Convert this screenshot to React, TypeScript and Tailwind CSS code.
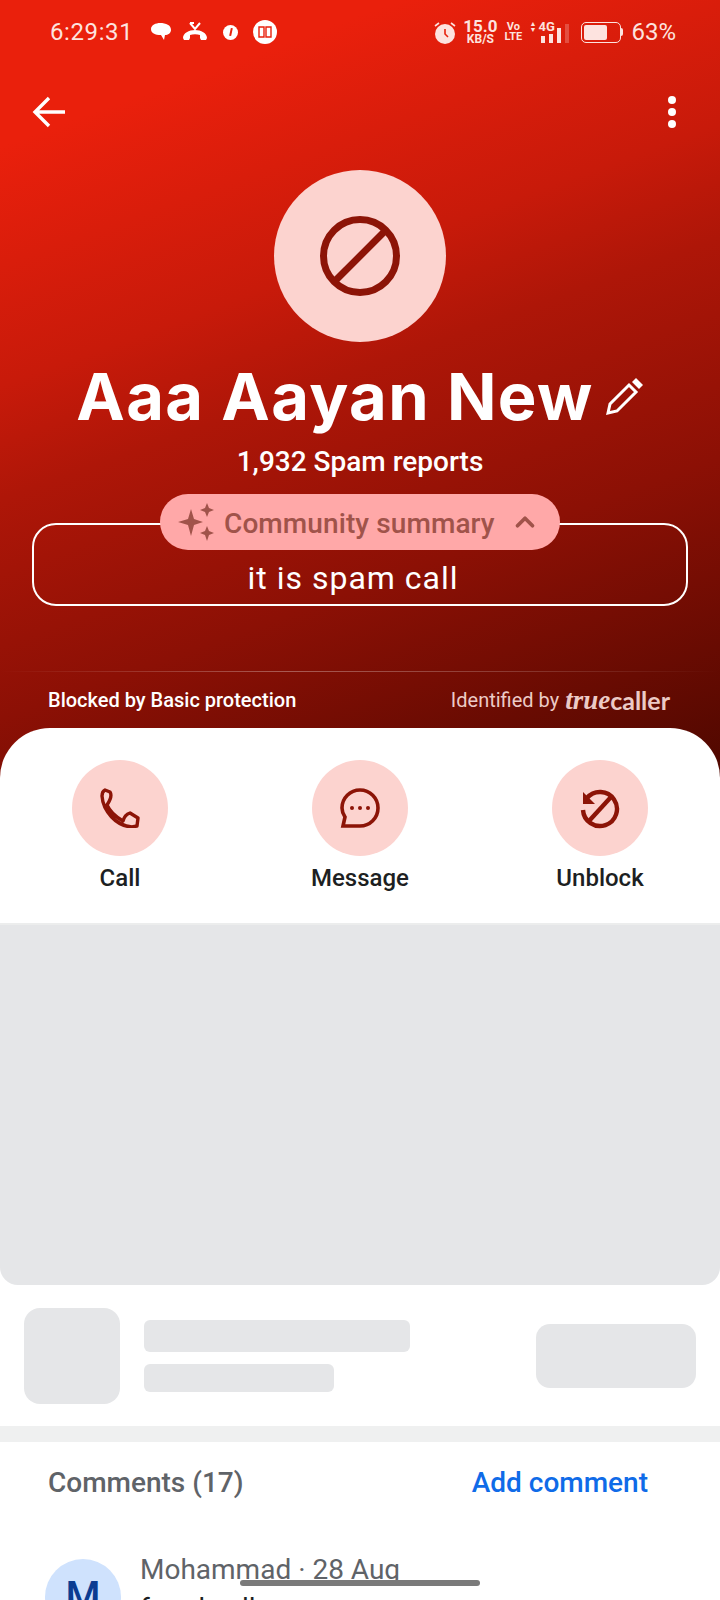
import React from "react";
import { ChevronUp } from "lucide-react";

const roboto = "font-['Roboto',sans-serif]";

function StatusBar() {
  return (
    <div className="flex h-[64px] items-center pl-[50px] pr-[44px] text-[#fde3df]">
      <span className="w-[100px] font-['Roboto',sans-serif] text-[24px] tracking-[0.6px]">6:29:31</span>
      {/* notification icons */}
      <svg width="20" height="18" viewBox="0 0 20 18" className="ml-[1px]" fill="#fff">
        <path d="M9 0c6 0 11 2 11 7 0 3-3 5-6 5l-1 5-3-5C4 12 0 10 0 6c0-4 5-6 9-6z" />
      </svg>
      <svg width="24" height="20" viewBox="0 0 24 20" className="ml-[12px]" fill="#fff">
        <path d="M0 16c0-5 6-8 12-8s12 3 12 8l-1 2h-5l-1-2v-3c-3-1-7-1-10 0v3l-1 2H1z" />
        <path d="M7 1l5 6 5-6M7 1h4" fill="none" stroke="#fff" strokeWidth="2" />
      </svg>
      <div className="ml-[16px] flex h-[15px] w-[15px] items-center justify-center rounded-full bg-white">
        <span className="h-[8px] w-[2px] rotate-12 bg-[#e8200c]" />
      </div>
      <div className="ml-[15px] flex h-[24px] w-[24px] items-center justify-center rounded-full bg-white">
        <svg width="14" height="14" viewBox="0 0 14 14" fill="none" stroke="#e8200c" strokeWidth="1.4">
          <path d="M1 2h5v10H1zM8 2h5v10H8z" />
        </svg>
      </div>
      <div className="flex-1" />
      {/* system icons */}
      <svg width="22" height="23" viewBox="0 0 22 23">
        <circle cx="11" cy="13" r="10" fill="#fde3df" />
        <path d="M11 8v5l3 3" fill="none" stroke="#e8200c" strokeWidth="1.6" />
        <path d="M1 5l4-3M21 5l-4-3" stroke="#fde3df" strokeWidth="1.6" />
      </svg>
      <div className="ml-[6px] flex w-[36px] flex-col items-center font-['Roboto',sans-serif] font-bold">
        <span className="h-[13px] text-[17px] leading-[13px]">15.0</span>
        <span className="mt-[1px] h-[10px] text-[12px] leading-[10px]">KB/S</span>
      </div>
      <div className="ml-[7px] flex w-[16px] flex-col items-center font-['Roboto',sans-serif] text-[11px] font-bold leading-[10px]">
        <span>Vo</span>
        <span>LTE</span>
      </div>
      <div className="relative ml-[8px] h-[22px] w-[40px]">
        <span className="absolute left-[9px] top-[-1px] font-['Roboto',sans-serif] text-[13px] font-bold leading-[13px]">4G</span>
        <span className="absolute left-0 top-0 text-[7px] leading-[6px]">▲</span>
        <span className="absolute left-0 top-[6px] text-[7px] leading-[6px]">▼</span>
        <div className="absolute bottom-0 left-[12px] flex items-end gap-[4px]">
          <span className="h-[7px] w-[4px] bg-[#fde3df]" />
          <span className="h-[9px] w-[4px] bg-[#fde3df]" />
          <span className="h-[15px] w-[4px] bg-[#fde3df]" />
          <span className="h-[19px] w-[4px] bg-[#fde3df] opacity-25" />
        </div>
      </div>
      <div className="ml-[12px] flex items-center">
        <div className="flex h-[21px] w-[40px] items-center rounded-[5px] border-[1.5px] border-[#fde3df] p-[2px]">
          <div className="h-full w-[23px] rounded-[2px] bg-[#fde3df]" />
        </div>
        <span className="h-[8px] w-[2px] rounded-r-sm bg-[#fde3df]" />
      </div>
      <span className="ml-[8px] font-['Roboto',sans-serif] text-[24px]">63%</span>
    </div>
  );
}

function BlockIcon({ size, stroke }: { size: number; stroke: number }) {
  return (
    <svg width={size} height={size} viewBox="0 0 80 80" fill="none" stroke="#8c1407" strokeWidth={stroke}>
      <circle cx="40" cy="40" r={40 - stroke / 2} />
      <path d="M13 67L67 13" />
    </svg>
  );
}

function Header() {
  return (
    <div className="flex h-[780px] flex-col items-center bg-[linear-gradient(160deg,#ea200c_14%,#c81a0a_37%,#ae1608_48%,#8c1005_69%,#520800_98%)]">
      <div className="w-full">
        <StatusBar />
        <div className="mt-[15px] flex h-[66px] items-center justify-between pl-[32px] pr-[44px] text-white">
          <svg width="34" height="32" viewBox="0 0 34 32" fill="none" stroke="#fff" strokeWidth="3.4">
            <path d="M33 16H3M17 2L3 16l14 14" />
          </svg>
          <div className="flex flex-col gap-[4px]">
            <span className="h-[8px] w-[8px] rounded-full bg-white" />
            <span className="h-[8px] w-[8px] rounded-full bg-white" />
            <span className="h-[8px] w-[8px] rounded-full bg-white" />
          </div>
        </div>
      </div>
      <div className="mt-[25px] flex h-[172px] w-[172px] items-center justify-center rounded-full bg-[#fcd3cf]">
        <BlockIcon size={80} stroke={7} />
      </div>
      <div className="mt-[16px] flex h-[76px] items-center text-white">
        <span className="font-['Inter',sans-serif] text-[65px] font-bold leading-none tracking-[1.4px]">Aaa Aayan New</span>
        <svg width="38" height="38" viewBox="0 0 38 38" className="ml-[12px]" fill="none" stroke="#fff" strokeWidth="3">
          <path d="M2 36l2-9L23 8l7 7-19 19z" />
          <path d="M26 5l3-3 1-1 7 7-1 1-3 3z" fill="#fff" stroke="none" />
        </svg>
      </div>
      <div className={`mt-[12px] text-[28px] font-medium leading-[32px] text-white ${roboto}`}>1,932 Spam reports</div>
      <div className="relative mt-[45px] flex h-[83px] w-[656px] items-end justify-center rounded-[24px] border-2 border-white pb-[6px] pr-[14px]">
        <div className="absolute left-[126px] top-[-31px] flex h-[56px] w-[400px] items-center rounded-[28px] bg-[#ffa8a8] pl-[17px] text-[#a0534a]">
          <svg width="38" height="38" viewBox="0 0 38 38" fill="#a0534a">
            <path d="M14 6l3 10 9 3-9 3-3 11-3-11-10-3 10-3z" />
            <path d="M30 0l2 5 5 2-5 2-2 5-2-5-5-2 5-2z" />
            <path d="M30 23l2 5 5 2-5 2-2 6-2-6-5-2 5-2z" />
          </svg>
          <span className={`ml-[9px] mt-[3px] text-[28px] font-medium leading-none tracking-[0.1px] ${roboto}`}>Community summary</span>
          <ChevronUp size={30} strokeWidth={3} className="ml-[15px]" />
        </div>
        <span className={`text-[32px] leading-[40px] tracking-[1px] text-white ${roboto}`}>it is spam call</span>
      </div>
      <div className="mt-[65px] h-[1px] w-full bg-[linear-gradient(90deg,transparent,#ffffff50_40%,#ffffff30_70%,transparent)]" />
      <div className="mt-[15px] flex w-full items-center justify-between pl-[48px] pr-[50px]">
        <span className={`text-[20px] font-medium leading-[26px] text-white ${roboto}`}>Blocked by Basic protection</span>
        <div className="flex items-center text-[#eccac6]">
          <span className={`text-[20px] leading-[26px] ${roboto}`}>Identified by</span>
          <span className="ml-[6px] font-['Liberation_Serif',serif] text-[27px] font-bold italic leading-[26px]">true</span>
          <span className="font-['Lato',sans-serif] text-[25px] font-bold leading-[26px]">caller</span>
        </div>
      </div>
    </div>
  );
}

function ActionButton({ label, children }: { label: string; children: React.ReactNode }) {
  return (
    <div className="flex w-[240px] flex-col items-center">
      <div className="flex h-[96px] w-[96px] items-center justify-center rounded-full bg-[#fcd3cf]">{children}</div>
      <span className={`mt-[8px] text-[24px] font-medium leading-[28px] text-[#1d1f22] ${roboto}`}>{label}</span>
    </div>
  );
}

function Actions() {
  return (
    <div className="relative -mt-[52px] flex h-[197px] rounded-t-[50px] border-b-2 border-[#eceded] bg-white pt-[32px]">
      <ActionButton label="Call">
        <svg width="40" height="40" viewBox="0 0 40 40" fill="none" stroke="#8c1407" strokeWidth="3.4" strokeLinejoin="round">
          <path d="M5 2l5 2c2 3 1 7-3 13 3 7 9 12 16 16 1-4 4-7 7-8l8 5-1 8-5 1C16 38 3 23 2 8c0-3 1-5 3-6z" />
        </svg>
      </ActionButton>
      <ActionButton label="Message">
        <svg width="40" height="40" viewBox="0 0 40 40" fill="none" stroke="#8c1407" strokeWidth="3.6">
          <path d="M20 2a18 18 0 0 1 0 36H3l2-9c-2-3-3-6-3-9A18 18 0 0 1 20 2z" />
          <circle cx="12" cy="20" r="2" fill="#8c1407" stroke="none" />
          <circle cx="20" cy="20" r="2" fill="#8c1407" stroke="none" />
          <circle cx="28" cy="20" r="2" fill="#8c1407" stroke="none" />
        </svg>
      </ActionButton>
      <ActionButton label="Unblock">
        <svg width="44" height="44" viewBox="0 0 44 44" fill="none" stroke="#8c1407" strokeWidth="4.4">
          <path d="M9 12a17 17 0 1 1-4 12" />
          <path d="M33 11L11 35" />
          <path d="M5 6v12h12z" fill="#8c1407" stroke="none" />
        </svg>
      </ActionButton>
    </div>
  );
}

function Skeletons() {
  return (
    <>
      <div className="h-[360px] rounded-b-[18px] bg-[#e5e6e8]" />
      <div className="flex items-center px-[24px] pb-[22px] pt-[23px]">
        <div className="h-[96px] w-[96px] rounded-[16px] bg-[#e5e6e8]" />
        <div className="ml-[24px] flex flex-col gap-[12px]">
          <div className="h-[32px] w-[266px] rounded-[6px] bg-[#e5e6e8]" />
          <div className="h-[28px] w-[190px] rounded-[6px] bg-[#e5e6e8]" />
        </div>
        <div className="ml-auto h-[64px] w-[160px] rounded-[14px] bg-[#e5e6e8]" />
      </div>
      <div className="h-[16px] bg-[#eff0f0]" />
    </>
  );
}

function Comments() {
  return (
    <div className="bg-white">
      <div className={`flex items-center justify-between pl-[48px] pr-[72px] pt-[25px] text-[28px] font-medium leading-[32px] ${roboto}`}>
        <span className="text-[#5f6368]">Comments (17)</span>
        <span className="text-[#0f6be8]">Add comment</span>
      </div>
      <div className="mt-[60px] flex pl-[45px]">
        <div className="flex h-[76px] w-[76px] items-center justify-center rounded-full bg-[#cfe2fd]">
          <span className={`text-[40px] font-medium text-[#0b3c91] ${roboto}`}>M</span>
        </div>
        <div className={`-mt-[4px] ml-[19px] ${roboto}`}>
          <div className="text-[28px] leading-[30px] text-[#5f6368]">Mohammad · 28 Aug</div>
          <div className="mt-[8px] text-[28px] leading-[32px] text-[#1d1f22]">fraud call</div>
        </div>
      </div>
    </div>
  );
}

export default function App() {
  return (
    <div className="relative h-[1600px] w-[720px] overflow-hidden bg-white">
      <Header />
      <Actions />
      <Skeletons />
      <Comments />
      <div className="absolute bottom-[14px] left-[240px] h-[6px] w-[240px] rounded-full bg-[#7a7a7a]" />
    </div>
  );
}
